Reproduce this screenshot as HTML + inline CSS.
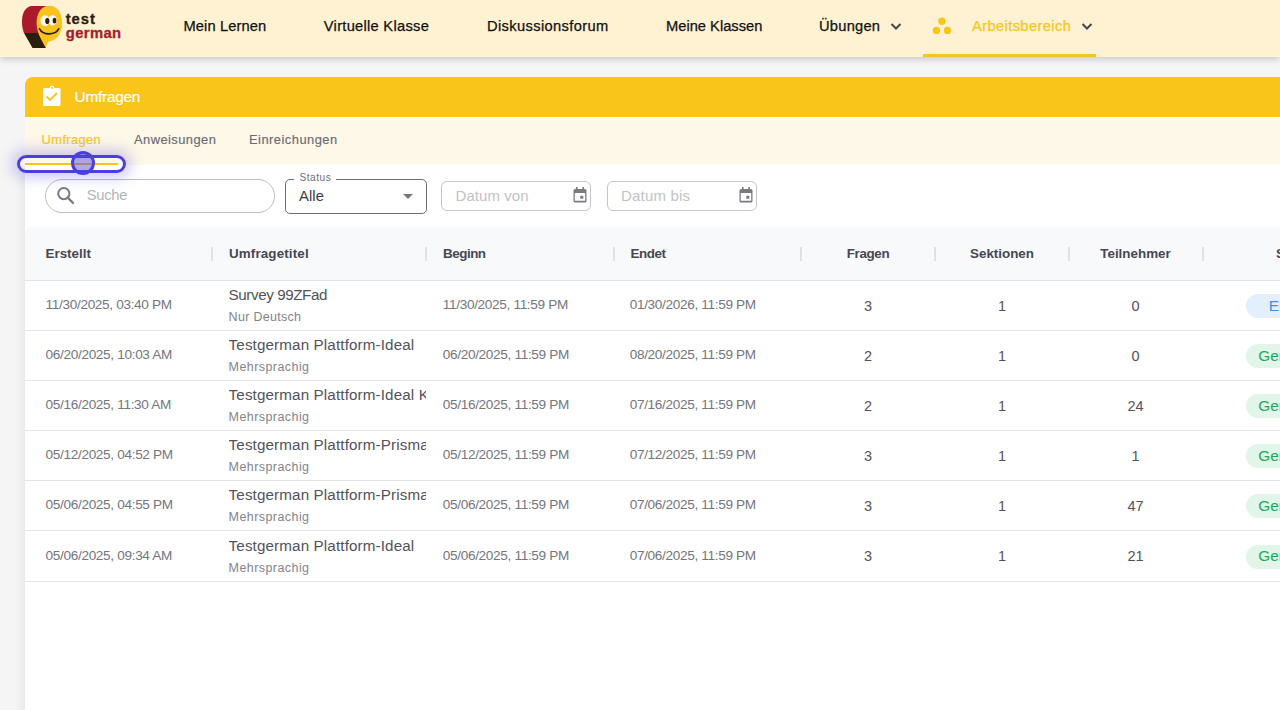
<!DOCTYPE html>
<html><head><meta charset="utf-8">
<style>
*{margin:0;padding:0;box-sizing:border-box}
html,body{width:1280px;height:710px;overflow:hidden;background:#f5f5f5;font-family:"Liberation Sans",sans-serif}
.a{position:absolute;white-space:nowrap;line-height:1}
#hdr{position:absolute;left:0;top:0;width:1280px;height:57px;background:#fef2d3;box-shadow:0 2px 7px rgba(0,0,0,.2);z-index:5}
.nav{color:#111;font-size:14.7px;-webkit-text-stroke:0.25px #111}
#card{position:absolute;left:25px;top:77px;width:1275px;height:700px;background:#fff;border-radius:8px 0 0 0;overflow:hidden}
#banner{position:absolute;left:0;top:0;width:100%;height:40px;background:#fac51b}
#tabs{position:absolute;left:0;top:41px;width:100%;height:47px;background:#fef8e8}
#thead{position:absolute;left:0;top:150px;width:100%;height:54px;background:#f8f9fb;border-radius:6px 0 0 0;border-bottom:1px solid #e4e4e7}
.th{font-weight:bold;font-size:13.4px;color:#474753}
.sep{position:absolute;top:20px;width:2px;height:14px;background:#e2e2e6}
.row{position:absolute;left:0;width:100%;border-bottom:1px solid #e4e4e7}
.dt{font-size:13.6px;color:#75757e;letter-spacing:-.33px}
.ti{font-size:15.2px;color:#52525c}
.su{font-size:12.5px;color:#83838b}
.nu{font-size:14.5px;color:#52525c}
.pill{position:absolute;left:1221px;top:13.3px;width:80px;height:24px;border-radius:12px}
.pill span{position:absolute;top:3.7px;font-size:15.4px;line-height:1;white-space:nowrap}
.tab{font-size:12.9px;color:#6a6a72;-webkit-text-stroke:0.15px #6a6a72}
</style></head><body>
<div id="hdr">
  <svg class="a" style="left:0;top:0" width="130" height="57" viewBox="0 0 130 57">
    <path d="M31.5 6 L50 6 L44 44 L37 33 L24 33 C22.5 29 22 26 22 22 C22 13 25 7 31.5 6 Z" fill="#a91b2a"/>
    <path d="M24 33 L38 33 L46 48 L32.5 48 Z" fill="#2a1e0c"/>
    <path d="M49.5 5.8 C57 5.8 62 13 62 23 C62 33 57 40.5 49 41.5 L47.6 43 L45.8 47.5 C42 41 37 33 36.6 24 C36.3 13 41.5 5.8 49.5 5.8 Z" fill="#f9c21e"/>
    <ellipse cx="45.1" cy="20.7" rx="4.6" ry="5.4" fill="#fdf8e8" stroke="#e8dcc0" stroke-width=".3"/>
    <ellipse cx="52.6" cy="20.2" rx="4.1" ry="5.2" fill="#fdf8e8" stroke="#e8dcc0" stroke-width=".3"/>
    <ellipse cx="47.3" cy="21" rx="2.1" ry="3.1" fill="#2a1e0c"/>
    <ellipse cx="54.5" cy="20.6" rx="1.8" ry="2.9" fill="#2a1e0c"/>
    <path d="M39.5 28.8 C43 35.5 55 35.5 58.7 28.8" stroke="#2a1e0c" stroke-width="1.7" fill="none" stroke-linecap="round"/>
  </svg>
  <div class="a" style="left:65.7px;top:11.8px;font-size:14.8px;font-weight:bold;color:#2a1e0c;letter-spacing:1px;-webkit-text-stroke:.3px #2a1e0c">test</div>
  <div class="a" style="left:65.7px;top:25.5px;font-size:14.8px;font-weight:bold;color:#a91b2a;letter-spacing:0.4px;-webkit-text-stroke:.3px #a91b2a">german</div>

  <div class="a nav" style="left:183.5px;top:18.8px;letter-spacing:.1px">Mein Lernen</div>
  <div class="a nav" style="left:323.8px;top:18.8px;letter-spacing:.27px">Virtuelle Klasse</div>
  <div class="a nav" style="left:487px;top:18.8px;letter-spacing:.36px">Diskussionsforum</div>
  <div class="a nav" style="left:666px;top:18.8px">Meine Klassen</div>
  <div class="a nav" style="left:819px;top:18.8px;letter-spacing:.23px">Übungen</div>
  <svg class="a" style="left:889px;top:21.6px" width="14" height="10" viewBox="0 0 14 10"><path d="M2.5 2 L7 6.5 L11.5 2" stroke="#46444f" stroke-width="2" fill="none"/></svg>
  <svg class="a" style="left:931px;top:16px" width="22" height="20" viewBox="0 0 22 20"><circle cx="10.9" cy="5.25" r="3.7" fill="#fac51b"/><circle cx="5.4" cy="14.4" r="3.65" fill="#fac51b"/><circle cx="16.4" cy="14.4" r="3.65" fill="#fac51b"/></svg>
  <div class="a nav" style="left:972px;top:18.8px;letter-spacing:.38px;color:#fac51b;-webkit-text-stroke:0.25px #fac51b">Arbeitsbereich</div>
  <svg class="a" style="left:1080px;top:21.6px" width="14" height="10" viewBox="0 0 14 10"><path d="M2.5 2 L7 6.5 L11.5 2" stroke="#46444f" stroke-width="2" fill="none"/></svg>
  <div class="a" style="left:923px;top:54px;width:173px;height:3px;background:#fac51b"></div>
</div>

<div class="a" style="left:25px;top:165px;width:1300px;height:600px;box-shadow:-3px 0 8px rgba(0,0,0,.06)"></div>
<div id="card">
  <div id="banner">
    <svg class="a" style="left:17px;top:8px" width="20" height="22" viewBox="0 0 20 22"><path d="M2.5 3 H17 a1.5 1.5 0 0 1 1.5 1.5 V19.5 a1.5 1.5 0 0 1 -1.5 1.5 H2.5 a1.5 1.5 0 0 1 -1.5 -1.5 V4.5 a1.5 1.5 0 0 1 1.5 -1.5Z" fill="#fff"/><circle cx="10" cy="3" r="2.3" fill="#fff"/><circle cx="10" cy="3" r="0.9" fill="#fac51b"/><path d="M4.5 11.5 L8 15 L15 8" stroke="#fac51b" stroke-width="1.8" fill="none"/></svg>
    <div class="a" style="left:49.6px;top:12px;font-size:15.4px;color:#fff;letter-spacing:-.25px;-webkit-text-stroke:.2px #fff">Umfragen</div>
  </div>
  <div id="tabs">
    <div class="a tab" style="left:16.6px;top:15.9px;color:#fac51b;-webkit-text-stroke:0.15px #fac51b;letter-spacing:.37px">Umfragen</div>
    <div class="a tab" style="left:109px;top:15.9px;letter-spacing:.44px">Anweisungen</div>
    <div class="a tab" style="left:224px;top:15.9px;letter-spacing:.48px">Einreichungen</div>
  </div>
  <div class="a" style="left:20px;top:102px;width:230px;height:34px;border:1px solid #bdbdc2;border-radius:17px"></div>
  <svg class="a" style="left:30px;top:108px" width="22" height="22" viewBox="0 0 22 22"><circle cx="8.8" cy="8.6" r="5.6" stroke="#7a7a82" stroke-width="2" fill="none"/><path d="M12.8 12.6 L18 18" stroke="#7a7a82" stroke-width="2.3" stroke-linecap="round"/></svg>
  <div class="a" style="left:61.7px;top:110.5px;font-size:14.8px;color:#b4b4ba;letter-spacing:-.3px">Suche</div>
  <div class="a" style="left:260px;top:102px;width:142px;height:35px;border:1px solid #6e6e76;border-radius:5px"></div>
  <div class="a" style="left:269px;top:100px;width:42px;height:5px;background:#fff"></div>
  <div class="a" style="left:274.4px;top:96.1px;font-size:10.2px;color:#6e6e76;letter-spacing:.5px">Status</div>
  <div class="a" style="left:274px;top:111.6px;font-size:14.8px;color:#3b3b45;letter-spacing:.1px">Alle</div>
  <svg class="a" style="left:378px;top:117px" width="10" height="6" viewBox="0 0 10 6"><path d="M0 0 H10 L5 5Z" fill="#77777d"/></svg>
  <div class="a" style="left:416px;top:104px;width:150px;height:30px;border:1px solid #c4c4c9;border-radius:6px"></div>
  <div class="a" style="left:430.6px;top:111.3px;font-size:15px;color:#c2c2c8;letter-spacing:.05px">Datum von</div>
  <svg class="a" style="left:548px;top:110px" width="14" height="16" viewBox="0 0 14 16"><path d="M3 0 h1.6 v2 h4.8 v-2 h1.6 v2 h1 a1.5 1.5 0 0 1 1.5 1.5 v10.5 a1.5 1.5 0 0 1 -1.5 1.5 h-10 a1.5 1.5 0 0 1 -1.5 -1.5 v-10.5 a1.5 1.5 0 0 1 1.5 -1.5 h1Z M1.8 6 v7.8 h10.4 v-7.8Z M7.3 8.8 h3 v3 h-3Z" fill="#7a7a82" fill-rule="evenodd"/></svg>
  <div class="a" style="left:582px;top:104px;width:150px;height:30px;border:1px solid #c4c4c9;border-radius:6px"></div>
  <div class="a" style="left:596px;top:111.3px;font-size:15px;color:#c2c2c8;letter-spacing:.18px">Datum bis</div>
  <svg class="a" style="left:714px;top:110px" width="14" height="16" viewBox="0 0 14 16"><path d="M3 0 h1.6 v2 h4.8 v-2 h1.6 v2 h1 a1.5 1.5 0 0 1 1.5 1.5 v10.5 a1.5 1.5 0 0 1 -1.5 1.5 h-10 a1.5 1.5 0 0 1 -1.5 -1.5 v-10.5 a1.5 1.5 0 0 1 1.5 -1.5 h1Z M1.8 6 v7.8 h10.4 v-7.8Z M7.3 8.8 h3 v3 h-3Z" fill="#7a7a82" fill-rule="evenodd"/></svg>
  <div id="thead">
    <div class="a th" style="left:20.5px;top:19.7px">Erstellt</div>
    <div class="sep" style="left:186px"></div>
    <div class="a th" style="left:203.9px;top:19.7px;letter-spacing:.15px">Umfragetitel</div>
    <div class="sep" style="left:400px"></div>
    <div class="a th" style="left:418px;top:19.7px;letter-spacing:-.47px">Beginn</div>
    <div class="sep" style="left:588px"></div>
    <div class="a th" style="left:605.4px;top:19.7px;letter-spacing:-.4px">Endet</div>
    <div class="sep" style="left:775px"></div>
    <div class="a th" style="left:676px;top:19.7px;width:334px;text-align:center;letter-spacing:-.33px">Fragen</div>
    <div class="sep" style="left:909px"></div>
    <div class="a th" style="left:810px;top:19.7px;width:334px;text-align:center">Sektionen</div>
    <div class="sep" style="left:1043px"></div>
    <div class="a th" style="left:943.5px;top:19.7px;width:334px;text-align:center">Teilnehmer</div>
    <div class="sep" style="left:1177px"></div>
    <div class="a th" style="left:1251px;top:19.7px">Status</div>
  </div>
  <div class="row" style="top:204px;height:50px"><div class="a" style="left:0;top:0px;width:100%;height:50px">
    <div class="a dt" style="left:20.6px;top:17.3px">11/30/2025, 03:40 PM</div>
    <div class="a" style="left:203.6px;top:0;width:197.4px;height:50px;overflow:hidden">
      <div class="a ti" style="left:0;top:6.2px;letter-spacing:-0.42px">Survey 99ZFad</div>
      <div class="a su" style="left:0;top:30.2px;letter-spacing:0.3px">Nur Deutsch</div>
    </div>
    <div class="a dt" style="left:417.8px;top:17.3px">11/30/2025, 11:59 PM</div>
    <div class="a dt" style="left:604.7px;top:17.3px">01/30/2026, 11:59 PM</div>
    <div class="a nu" style="left:676px;top:17.9px;width:334px;text-align:center">3</div>
    <div class="a nu" style="left:810px;top:17.9px;width:334px;text-align:center">1</div>
    <div class="a nu" style="left:943.5px;top:17.9px;width:334px;text-align:center">0</div>
    <div class="pill" style="background:#e3effd"><span style="left:22.7px;color:#3b8ef0">Entwurf</span></div>
  </div></div>
  <div class="row" style="top:254px;height:50px"><div class="a" style="left:0;top:0px;width:100%;height:50px">
    <div class="a dt" style="left:20.6px;top:17.3px">06/20/2025, 10:03 AM</div>
    <div class="a" style="left:203.6px;top:0;width:197.4px;height:50px;overflow:hidden">
      <div class="a ti" style="left:0;top:6.2px;letter-spacing:0.13px">Testgerman Plattform-Ideal</div>
      <div class="a su" style="left:0;top:30.2px;letter-spacing:0.43px">Mehrsprachig</div>
    </div>
    <div class="a dt" style="left:417.8px;top:17.3px">06/20/2025, 11:59 PM</div>
    <div class="a dt" style="left:604.7px;top:17.3px">08/20/2025, 11:59 PM</div>
    <div class="a nu" style="left:676px;top:17.9px;width:334px;text-align:center">2</div>
    <div class="a nu" style="left:810px;top:17.9px;width:334px;text-align:center">1</div>
    <div class="a nu" style="left:943.5px;top:17.9px;width:334px;text-align:center">0</div>
    <div class="pill" style="background:#e1f5e8"><span style="left:12.3px;color:#1fa65c">Gerade aktiv</span></div>
  </div></div>
  <div class="row" style="top:304px;height:50px"><div class="a" style="left:0;top:0px;width:100%;height:50px">
    <div class="a dt" style="left:20.6px;top:17.3px">05/16/2025, 11:30 AM</div>
    <div class="a" style="left:203.6px;top:0;width:197.4px;height:50px;overflow:hidden">
      <div class="a ti" style="left:0;top:6.2px;letter-spacing:0.13px">Testgerman Plattform-Ideal Kurs</div>
      <div class="a su" style="left:0;top:30.2px;letter-spacing:0.43px">Mehrsprachig</div>
    </div>
    <div class="a dt" style="left:417.8px;top:17.3px">05/16/2025, 11:59 PM</div>
    <div class="a dt" style="left:604.7px;top:17.3px">07/16/2025, 11:59 PM</div>
    <div class="a nu" style="left:676px;top:17.9px;width:334px;text-align:center">2</div>
    <div class="a nu" style="left:810px;top:17.9px;width:334px;text-align:center">1</div>
    <div class="a nu" style="left:943.5px;top:17.9px;width:334px;text-align:center">24</div>
    <div class="pill" style="background:#e1f5e8"><span style="left:12.3px;color:#1fa65c">Gerade aktiv</span></div>
  </div></div>
  <div class="row" style="top:354px;height:50px"><div class="a" style="left:0;top:0px;width:100%;height:50px">
    <div class="a dt" style="left:20.6px;top:17.3px">05/12/2025, 04:52 PM</div>
    <div class="a" style="left:203.6px;top:0;width:197.4px;height:50px;overflow:hidden">
      <div class="a ti" style="left:0;top:6.2px;letter-spacing:0.13px">Testgerman Plattform-Prisma</div>
      <div class="a su" style="left:0;top:30.2px;letter-spacing:0.43px">Mehrsprachig</div>
    </div>
    <div class="a dt" style="left:417.8px;top:17.3px">05/12/2025, 11:59 PM</div>
    <div class="a dt" style="left:604.7px;top:17.3px">07/12/2025, 11:59 PM</div>
    <div class="a nu" style="left:676px;top:17.9px;width:334px;text-align:center">3</div>
    <div class="a nu" style="left:810px;top:17.9px;width:334px;text-align:center">1</div>
    <div class="a nu" style="left:943.5px;top:17.9px;width:334px;text-align:center">1</div>
    <div class="pill" style="background:#e1f5e8"><span style="left:12.3px;color:#1fa65c">Gerade aktiv</span></div>
  </div></div>
  <div class="row" style="top:404px;height:50px"><div class="a" style="left:0;top:0px;width:100%;height:50px">
    <div class="a dt" style="left:20.6px;top:17.3px">05/06/2025, 04:55 PM</div>
    <div class="a" style="left:203.6px;top:0;width:197.4px;height:50px;overflow:hidden">
      <div class="a ti" style="left:0;top:6.2px;letter-spacing:0.13px">Testgerman Plattform-Prisma</div>
      <div class="a su" style="left:0;top:30.2px;letter-spacing:0.43px">Mehrsprachig</div>
    </div>
    <div class="a dt" style="left:417.8px;top:17.3px">05/06/2025, 11:59 PM</div>
    <div class="a dt" style="left:604.7px;top:17.3px">07/06/2025, 11:59 PM</div>
    <div class="a nu" style="left:676px;top:17.9px;width:334px;text-align:center">3</div>
    <div class="a nu" style="left:810px;top:17.9px;width:334px;text-align:center">1</div>
    <div class="a nu" style="left:943.5px;top:17.9px;width:334px;text-align:center">47</div>
    <div class="pill" style="background:#e1f5e8"><span style="left:12.3px;color:#1fa65c">Gerade aktiv</span></div>
  </div></div>
  <div class="row" style="top:454px;height:51px"><div class="a" style="left:0;top:0.5px;width:100%;height:50px">
    <div class="a dt" style="left:20.6px;top:17.3px">05/06/2025, 09:34 AM</div>
    <div class="a" style="left:203.6px;top:0;width:197.4px;height:50px;overflow:hidden">
      <div class="a ti" style="left:0;top:6.2px;letter-spacing:0.13px">Testgerman Plattform-Ideal</div>
      <div class="a su" style="left:0;top:30.2px;letter-spacing:0.43px">Mehrsprachig</div>
    </div>
    <div class="a dt" style="left:417.8px;top:17.3px">05/06/2025, 11:59 PM</div>
    <div class="a dt" style="left:604.7px;top:17.3px">07/06/2025, 11:59 PM</div>
    <div class="a nu" style="left:676px;top:17.9px;width:334px;text-align:center">3</div>
    <div class="a nu" style="left:810px;top:17.9px;width:334px;text-align:center">1</div>
    <div class="a nu" style="left:943.5px;top:17.9px;width:334px;text-align:center">21</div>
    <div class="pill" style="background:#e1f5e8"><span style="left:12.3px;color:#1fa65c">Gerade aktiv</span></div>
  </div></div>
</div>
<div class="a" style="left:17px;top:155px;width:109px;height:18px;border:3px solid #4a3fdc;border-radius:9px;box-shadow:0 0 14px 5px rgba(90,80,230,.3)"></div>
<div class="a" style="left:25px;top:163px;width:93px;height:2px;background:#f9c21e"></div>
<div class="a" style="left:71px;top:151px;width:24px;height:24px;border:3px solid #4a3fdc;border-radius:12px;background:rgba(74,63,220,.45)"></div>
</body></html>
